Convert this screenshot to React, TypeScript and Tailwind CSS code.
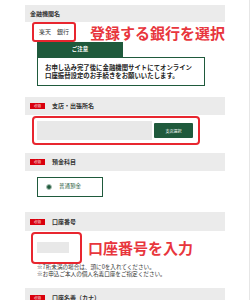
import React from 'react';

const font = {fontFamily: '"Noto Sans CJK JP", "Noto Sans", sans-serif'};

interface SectionHeaderProps {
    label: string;
    required?: boolean;
    className?: string;
}

function SectionHeader(props: SectionHeaderProps) {
    const {label, required, className} = props;
    return (
        <div className={`flex items-center gap-[7px] bg-[#ebebeb] pl-[5px] ${className ?? ''}`}>
            {required && (
                <span className="flex h-[6px] w-[15px] items-center justify-center bg-[#d9000d] text-[3.5px] leading-none text-white">
                    必須
                </span>
            )}
            <span className="text-[6px] font-bold leading-none text-[#333333]">{label}</span>
        </div>
    );
}

export default function App() {
    return (
        <div className="h-[300px] w-[250px] overflow-hidden border-r border-[#e6e6e6] bg-white" style={font}>
            <div className="ml-[25px] flex w-[200px] flex-col pt-[5px]">
                <SectionHeader label="金融機関名" className="h-[17px]"/>

                <div className="flex items-center">
                    <div className="ml-[7px] flex h-[20px] w-[49px] items-center rounded-[3px] border-2 border-[#e8262f] pl-[5px]">
                        <span className="text-[6px] leading-none text-[#333333]">楽天　銀行</span>
                    </div>
                    <p className="ml-[14px] whitespace-nowrap text-[15px] font-bold leading-none text-[#e8363d]">登録する銀行を選択</p>
                </div>

                <div className="ml-[12px] flex h-[15px] w-[86px] items-center justify-center bg-[#1f5a3c]">
                    <span className="text-[5.5px] font-bold leading-none text-white">ご注意</span>
                </div>
                <div className="ml-[12px] flex h-[29px] w-[168px] flex-col justify-center border-[1.5px] border-[#1f5a3c] pl-[7px]">
                    <p className="whitespace-nowrap text-[6.4px] font-bold leading-[7.5px] text-[#222222]">
                        お申し込み完了後に金融機関サイトにてオンライン
                    </p>
                    <p className="whitespace-nowrap text-[6.4px] font-bold leading-[7.5px] text-[#222222]">
                        口座振替設定のお手続きをお願いいたします。
                    </p>
                </div>

                <SectionHeader label="支店・出張所名" required className="mt-[11px] h-[18px]"/>
                <div className="ml-[7px] mt-[1px] flex h-[29px] w-[168px] items-center gap-[2px] rounded-[4px] border-[2.5px] border-[#e8262f] pl-[3px]">
                    <div className="h-[19px] w-[115px] bg-[#e8e8e8]"/>
                    <div className="flex h-[15px] w-[39px] items-center justify-center rounded-[1px] bg-[#1f5a3c]">
                        <span className="text-[4px] leading-none text-white">支店選択</span>
                    </div>
                </div>

                <SectionHeader label="預金科目" required className="mt-[8px] h-[18px]"/>
                <div className="ml-[12px] mt-[6px] flex h-[20px] w-[66px] items-center gap-[7px] border-[1.5px] border-[#1f5a3c] pl-[8px]">
                    <span className="flex h-[6px] w-[6px] items-center justify-center rounded-full border border-[#9bb5a7]">
                        <span className="h-[3.5px] w-[3.5px] rounded-full bg-[#1f5a3c]"/>
                    </span>
                    <span className="text-[5.5px] leading-none text-[#1f5a3c]">普通預金</span>
                </div>

                <SectionHeader label="口座番号" required className="mt-[15px] h-[19px]"/>
                <div className="flex items-center">
                    <div className="ml-[6px] mt-[1px] flex h-[32px] w-[51px] items-start rounded-[4px] border-[2.5px] border-[#e8262f] pl-[4px] pt-[8px]">
                        <div className="h-[11px] w-[32px] bg-[#e8e8e8]"/>
                    </div>
                    <p className="ml-[6px] whitespace-nowrap text-[15px] font-bold leading-none text-[#e8363d]">口座番号を入力</p>
                </div>
                <div className="ml-[12px] flex flex-col">
                    <p className="whitespace-nowrap text-[5.6px] leading-[7px] text-[#333333]">※7桁未満の場合は、頭に0を入れてください。</p>
                    <p className="whitespace-nowrap text-[5.6px] leading-[7px] text-[#333333]">※お申込ご本人の個人名義口座をご指定ください。</p>
                </div>

                <SectionHeader label="口座名義（カナ）" required className="mt-[10px] h-[18px] items-start pt-[7px]"/>
            </div>
        </div>
    );
}
